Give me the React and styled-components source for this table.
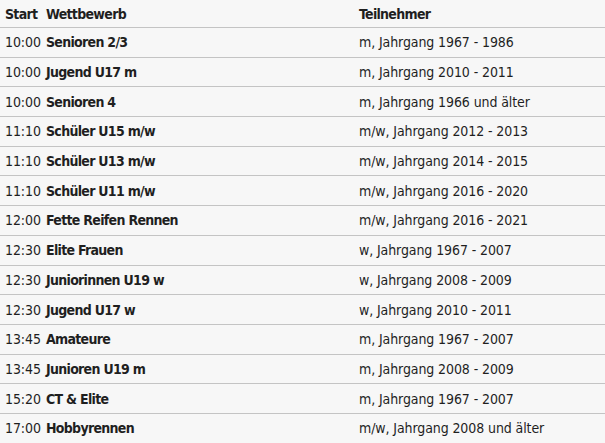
import React from "react";
import styled, { createGlobalStyle } from "styled-components";

const Global = createGlobalStyle`
  html, body { margin: 0; padding: 0; background: #f7f7f7; }
  body { font-family: "DejaVu Sans Condensed", "Liberation Sans Narrow", "Liberation Sans", sans-serif; }
`;

const Table = styled.div`
  width: 605px;
  background: #f7f7f7;
  color: #1f1f1f;
  font-size: 14px;
`;

const Row = styled.div`
  display: grid;
  grid-template-columns: 41px 313px 1fr;
  align-items: center;
  height: ${(p) => (p.$head ? "27px" : "28.7px")};
  border-bottom: 1px solid #c4c4c4;
`;

const Cell = styled.div`
  padding-left: 5px;
  white-space: nowrap;
  font-weight: ${(p) => (p.$bold ? 700 : 400)};
  letter-spacing: ${(p) => (p.$bold ? "-0.7px" : "-0.1px")};
`;

const rows = [
  ["10:00", "Senioren 2/3", "m, Jahrgang 1967 - 1986"],
  ["10:00", "Jugend U17 m", "m, Jahrgang 2010 - 2011"],
  ["10:00", "Senioren 4", "m, Jahrgang 1966 und älter"],
  ["11:10", "Schüler U15 m/w", "m/w, Jahrgang 2012 - 2013"],
  ["11:10", "Schüler U13 m/w", "m/w, Jahrgang 2014 - 2015"],
  ["11:10", "Schüler U11 m/w", "m/w, Jahrgang 2016 - 2020"],
  ["12:00", "Fette Reifen Rennen", "m/w, Jahrgang 2016 - 2021"],
  ["12:30", "Elite Frauen", "w, Jahrgang 1967 - 2007"],
  ["12:30", "Juniorinnen U19 w", "w, Jahrgang 2008 - 2009"],
  ["12:30", "Jugend U17 w", "w, Jahrgang 2010 - 2011"],
  ["13:45", "Amateure", "m, Jahrgang 1967 - 2007"],
  ["13:45", "Junioren U19 m", "m, Jahrgang 2008 - 2009"],
  ["15:20", "CT & Elite", "m, Jahrgang 1967 - 2007"],
  ["17:00", "Hobbyrennen", "m/w, Jahrgang 2008 und älter"],
];

export default function App() {
  return (
    <>
      <Global />
      <Table>
        <Row $head>
          <Cell $bold>Start</Cell>
          <Cell $bold>Wettbewerb</Cell>
          <Cell $bold>Teilnehmer</Cell>
        </Row>
        {rows.map((r, i) => (
          <Row key={i}>
            <Cell>{r[0]}</Cell>
            <Cell $bold>{r[1]}</Cell>
            <Cell>{r[2]}</Cell>
          </Row>
        ))}
      </Table>
    </>
  );
}
